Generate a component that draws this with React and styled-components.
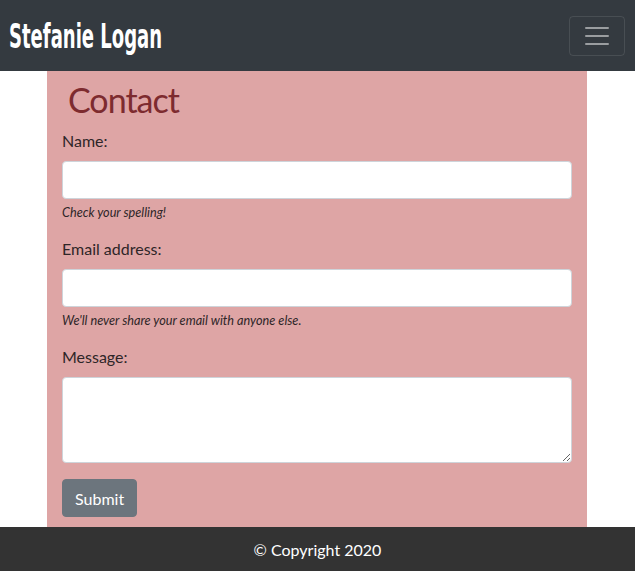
import styled, { createGlobalStyle } from 'styled-components';

const Global = createGlobalStyle`
  body {
    margin: 0;
    font-family: Lato, "Open Sans", sans-serif;
    font-size: 16px;
    color: #212529;
    background: #fff;
  }
  * { box-sizing: border-box; }
`;

const Nav = styled.nav`
  display: flex;
  align-items: center;
  justify-content: space-between;
  height: 71px;
  padding: 0 10px 0 9px;
  background: #343a40;
`;

// condensed display face squeezed from DejaVu, there is no Oswald offline
const Brand = styled.a`
  display: inline-block;
  font-family: "DejaVu Sans", sans-serif;
  font-weight: 700;
  font-size: 34px;
  line-height: 1;
  color: #fff;
  text-decoration: none;
  transform: scaleX(0.53);
  transform-origin: left center;
  margin-top: 1px;
`;

const Toggler = styled.button`
  display: flex;
  align-items: center;
  justify-content: center;
  width: 56px;
  height: 40px;
  padding: 0;
  background: transparent;
  border: 1px solid rgba(255, 255, 255, 0.1);
  border-radius: 4px;
`;

const Main = styled.main`
  display: flex;
  justify-content: center;
  padding-right: 1px;
`;

const Container = styled.div`
  width: 540px;
  padding: 7px 15px 10px;
  background: #dea5a5;
`;

const Title = styled.h1`
  margin: 0 0 8px 6px;
  font-family: Lato, sans-serif;
  font-weight: 400;
  font-size: 34px;
  letter-spacing: -1px;
  line-height: 43px;
  color: #7d2b2f;
`;

const Group = styled.div`
  margin-bottom: 16px;
`;

const Label = styled.label`
  display: block;
  margin-bottom: 8px;
  font-size: 16px;
  line-height: 24px;
  color: #2e2628;
`;

const Field = styled.input`
  display: block;
  width: 100%;
  height: ${p => p.$h || 38}px;
  padding: 6px 12px;
  font: inherit;
  background: #fff;
  border: 1px solid #ced4da;
  border-radius: 4px;
`;

const Area = styled(Field).attrs({ as: 'textarea' })`
  resize: vertical;
`;

const Hint = styled.small`
  display: block;
  margin-top: 4px;
  font-size: 12.7px;
  line-height: 18px;
  font-style: italic;
  color: #2e2628;
`;

const Submit = styled.button`
  height: 38px;
  padding: 0 12px;
  font-family: Lato, sans-serif;
  font-size: 16px;
  color: #fff;
  background: #6c757d;
  border: 1px solid #6c757d;
  border-radius: 4px;
`;

const Footer = styled.footer`
  display: flex;
  align-items: center;
  justify-content: center;
  height: 44px;
  background: #333;
  color: #fff;
  font-size: 16px;
`;

const MenuIcon = () => (
  <svg width="30" height="30" viewBox="0 0 30 30">
    <path
      d="M4 7h22M4 15h22M4 23h22"
      stroke="rgba(255,255,255,0.5)"
      strokeWidth="2"
      strokeLinecap="round"
    />
  </svg>
);

const App = () => (
  <>
    <Global />
    <Nav>
      <Brand href="#">Stefanie Logan</Brand>
      <Toggler aria-label="Toggle navigation">
        <MenuIcon />
      </Toggler>
    </Nav>
    <Main>
      <Container>
        <Title>Contact</Title>
        <form>
          <Group>
            <Label>Name:</Label>
            <Field type="text" />
            <Hint>Check your spelling!</Hint>
          </Group>
          <Group>
            <Label>Email address:</Label>
            <Field type="email" />
            <Hint>We'll never share your email with anyone else.</Hint>
          </Group>
          <Group>
            <Label>Message:</Label>
            <Area $h={86} />
          </Group>
          <Submit type="button">Submit</Submit>
        </form>
      </Container>
    </Main>
    <Footer>© Copyright 2020</Footer>
  </>
);

export default App;
